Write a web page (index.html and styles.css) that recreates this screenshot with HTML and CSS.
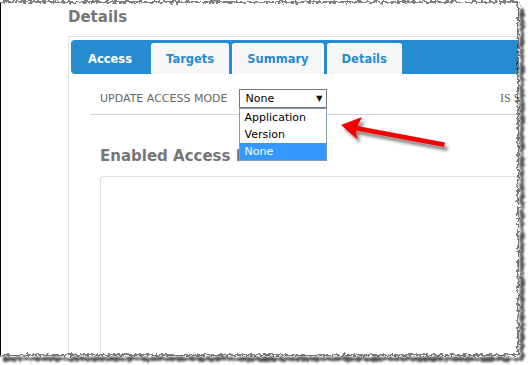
FILE: index.html
```html
<!DOCTYPE html>
<html lang="en">
<head>
  <meta charset="UTF-8">
  <title>Details</title>
  <link rel="stylesheet" href="styles.css">
</head>
<body>

<div class="sheet">
  <h2 class="page-title">Details</h2>

  <div class="panel">
    <div class="tabs">
      <div class="tab active">Access</div>
      <div class="tab">Targets</div>
      <div class="tab">Summary</div>
      <div class="tab">Details</div>
    </div>

    <div class="panel-body">
      <div class="form-row">
        <div class="field">
          <label>Update Access Mode</label>
          <div class="select">
            <span>None</span>
            <span class="caret">&#9660;</span>
            <ul class="options">
              <li>Application</li>
              <li>Version</li>
              <li class="selected">None</li>
            </ul>
          </div>
        </div>
        <div class="field">
          <label class="serif">Is Shared</label>
        </div>
      </div>

      <h3 class="section-title">Enabled Access Lists</h3>
      <div class="list-box"></div>
    </div>
  </div>
</div>

<!-- annotation arrow + torn paper edge -->
<svg class="overlay" width="528" height="365" viewBox="0 0 528 365">
  <defs>
    <filter id="rough" filterUnits="userSpaceOnUse" x="-20" y="-20" width="580" height="420">
      <feTurbulence type="fractalNoise" baseFrequency="0.3" numOctaves="2" seed="7" result="noise"/>
      <feDisplacementMap in="SourceGraphic" in2="noise" scale="6" xChannelSelector="R" yChannelSelector="G"/>
    </filter>
    <filter id="roughShadow" filterUnits="userSpaceOnUse" x="-20" y="-20" width="580" height="420">
      <feTurbulence type="fractalNoise" baseFrequency="0.3" numOctaves="2" seed="7" result="noise"/>
      <feDisplacementMap in="SourceGraphic" in2="noise" scale="6" xChannelSelector="R" yChannelSelector="G"/>
      <feGaussianBlur stdDeviation="1.2"/>
    </filter>
    <filter id="drop" x="-20%" y="-50%" width="140%" height="200%">
      <feDropShadow dx="3" dy="4" stdDeviation="1.5" flood-color="#000" flood-opacity="0.45"/>
    </filter>
  </defs>

  <path d="M341,125 L362,117 L357.5,126 L445,142.5 L444,147 L356,130.5 L357,139 Z" fill="#f50000" filter="url(#drop)"/>

  <path d="M-20,-20H560V400H-20Z M-10,2H518V355H-10Z" fill="#fff" fill-rule="evenodd" filter="url(#rough)"/>
  <path d="M522,8V359H3" fill="none" stroke="#555" stroke-width="4" filter="url(#roughShadow)"/>
  <path d="M-10,2H518V355H-10" fill="none" stroke="#000" stroke-width="1" filter="url(#rough)"/>
</svg>

</body>
</html>
```

FILE: styles.css
```css
/* General */
body {
  margin: 0;
  background: #fff;
  font-family: "DejaVu Sans", Verdana, sans-serif;
}

.sheet {
  position: relative;
  width: 518px;
  height: 355px;
  box-sizing: border-box;
  overflow: hidden;
  border-left: 1px solid #000;
  padding-left: 67px;
}

.page-title {
  margin: 0 0 10px;
  padding-top: 8px;
  font-size: 15px;
  line-height: 18px;
  color: #767676;
}

/* Panel + tabs */
.panel {
  width: 560px;
  height: 400px;
  border-top: 1px solid #e2e2e2;
  border-left: 1px solid #e2e2e2;
  padding: 3px 0 0 2px;
}

.tabs {
  display: flex;
  align-items: flex-end;
  height: 34px;
  box-sizing: border-box;
  padding-top: 3px;
  background: #278bd0;
  border-radius: 4px 0 0 4px;
}

.tab {
  height: 31px;
  box-sizing: border-box;
  line-height: 31px;
  padding: 0 14px;
  margin-right: 3px;
  background: #f6f6f6;
  border: 1px solid #fff;
  border-bottom: 0;
  border-radius: 3px 3px 0 0;
  color: #278bd0;
  font-size: 11.5px;
  font-weight: bold;
}

.tab.active {
  background: transparent;
  border-color: transparent;
  color: #fff;
  padding: 0 16px;
  margin-right: 2px;
}

/* Form */
.panel-body {
  padding: 15px 0 0 19px;
}

.form-row {
  display: grid;
  grid-template-columns: 400px 1fr;
  align-items: center;
  padding: 0 0 6px 10px;
  border-bottom: 1px solid #d4d4d4;
}

.field {
  display: flex;
  align-items: center;
}

.field label {
  font-size: 11px;
  color: #666;
  text-transform: uppercase;
  margin-right: 12px;
}

.field label.serif {
  font-family: "Liberation Serif", serif;
  font-size: 12px;
}

.select {
  position: relative;
  width: 88px;
  height: 19px;
  box-sizing: border-box;
  border: 1px solid #777;
  padding: 0 4px 0 5px;
  display: flex;
  align-items: center;
  justify-content: space-between;
  font-size: 11px;
  color: #000;
}

.caret {
  font-size: 8px;
}

.options {
  position: absolute;
  top: 18px;
  left: -1px;
  width: 88px;
  box-sizing: border-box;
  margin: 0;
  padding: 0;
  list-style: none;
  background: #fff;
  border: 1px solid #7f9db9;
  z-index: 2;
}

.options li {
  height: 17px;
  line-height: 17px;
  padding-left: 4px;
}

.options li.selected {
  background: #3399ff;
  color: #fff;
}

.section-title {
  margin: 32px 0 0 10px;
  font-size: 15px;
  line-height: 18px;
  color: #767676;
}

.list-box {
  margin: 11px 0 0 10px;
  height: 300px;
  border: 1px solid #e0e0e0;
  border-radius: 3px;
}

/* Overlay */
.overlay {
  position: absolute;
  top: 0;
  left: 0;
  pointer-events: none;
}
```
